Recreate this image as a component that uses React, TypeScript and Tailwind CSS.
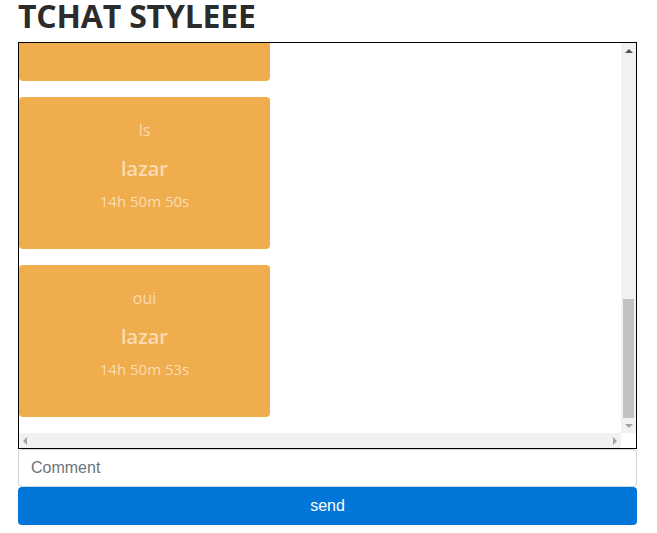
import React, { useEffect, useRef } from "react";

const messages = [
	{ text: "salut", author: "lazar", time: "14h 49m 12s" },
	{ text: "ça va ?", author: "lazar", time: "14h 49m 30s" },
	{ text: "test", author: "lazar", time: "14h 50m 02s" },
	{ text: "yo", author: "lazar", time: "14h 50m 21s" },
	{ text: "hello", author: "lazar", time: "14h 50m 44s" },
	{ text: "ls", author: "lazar", time: "14h 50m 50s" },
	{ text: "oui", author: "lazar", time: "14h 50m 53s" },
];

function Message({ text, author, time }: { text: string; author: string; time: string }) {
	return (
		<div className="w-[251px] h-[152px] shrink-0 mt-4 rounded bg-[#f0ad4e] text-[#fadcb0] flex flex-col items-center pt-[22px]">
			<div className="text-[16px] leading-[22px]">{text}</div>
			<div className="text-[20px] font-semibold leading-[28px] mt-[14px]">{author}</div>
			<div className="text-[15px] leading-[22px] mt-[7px]">{time}</div>
		</div>
	);
}

function Arrow({ dir, color }: { dir: "up" | "down" | "left" | "right"; color: string }) {
	const pts = {
		up: "0,4 8,4 4,0",
		down: "0,0 8,0 4,4",
		left: "4,0 4,8 0,4",
		right: "0,0 0,8 4,4",
	}[dir];
	const vert = dir === "up" || dir === "down";
	return (
		<svg width={vert ? 8 : 4} height={vert ? 4 : 8} viewBox={vert ? "0 0 8 4" : "0 0 4 8"}>
			<polygon points={pts} fill={color} />
		</svg>
	);
}

export default function App() {
	const boxRef = useRef<HTMLDivElement>(null);

	useEffect(() => {
		if (boxRef.current) boxRef.current.scrollTop = boxRef.current.scrollHeight;
	}, []);

	return (
		<div className="px-[18px] bg-white font-['Open_Sans',sans-serif]">
			<h1 className="text-[32px] font-bold leading-[32px] text-[#2b2b2b] mb-[10px] tracking-[-0.2px]">
				TCHAT STYLEEE
			</h1>
			<div className="w-[619px] h-[407px] border border-black flex flex-col">
				<div className="flex flex-1 min-h-0">
					<div ref={boxRef} className="flex-1 overflow-hidden">
						<div className="flex flex-col pb-4">
							{messages.map((m, i) => (
								<Message key={i} {...m} />
							))}
						</div>
					</div>
					<div className="w-[15px] bg-[#f1f1f1] flex flex-col items-center">
						<div className="h-[15px] flex items-center justify-center">
							<Arrow dir="up" color="#505050" />
						</div>
						<div className="flex-1 flex flex-col justify-end w-full px-[2px]">
							<div className="h-[119px] bg-[#c1c1c1]" />
						</div>
						<div className="h-[15px] flex items-center justify-center">
							<Arrow dir="down" color="#a3a3a3" />
						</div>
					</div>
				</div>
				<div className="flex h-[15px]">
					<div className="flex-1 bg-[#f1f1f1] flex items-center justify-between px-[4px]">
						<Arrow dir="left" color="#a3a3a3" />
						<Arrow dir="right" color="#a3a3a3" />
					</div>
					<div className="w-[15px] bg-white" />
				</div>
			</div>
			<input
				className="block w-[619px] h-[38px] border border-[#ced4da] rounded px-3 text-[16px] font-['Liberation_Sans',Arial,sans-serif] placeholder:text-[#6c757d] outline-none"
				placeholder="Comment"
			/>
			<button className="block w-[619px] h-[38px] rounded bg-[#0275d8] text-white text-[16px] font-['Liberation_Sans',Arial,sans-serif]">
				send
			</button>
		</div>
	);
}
